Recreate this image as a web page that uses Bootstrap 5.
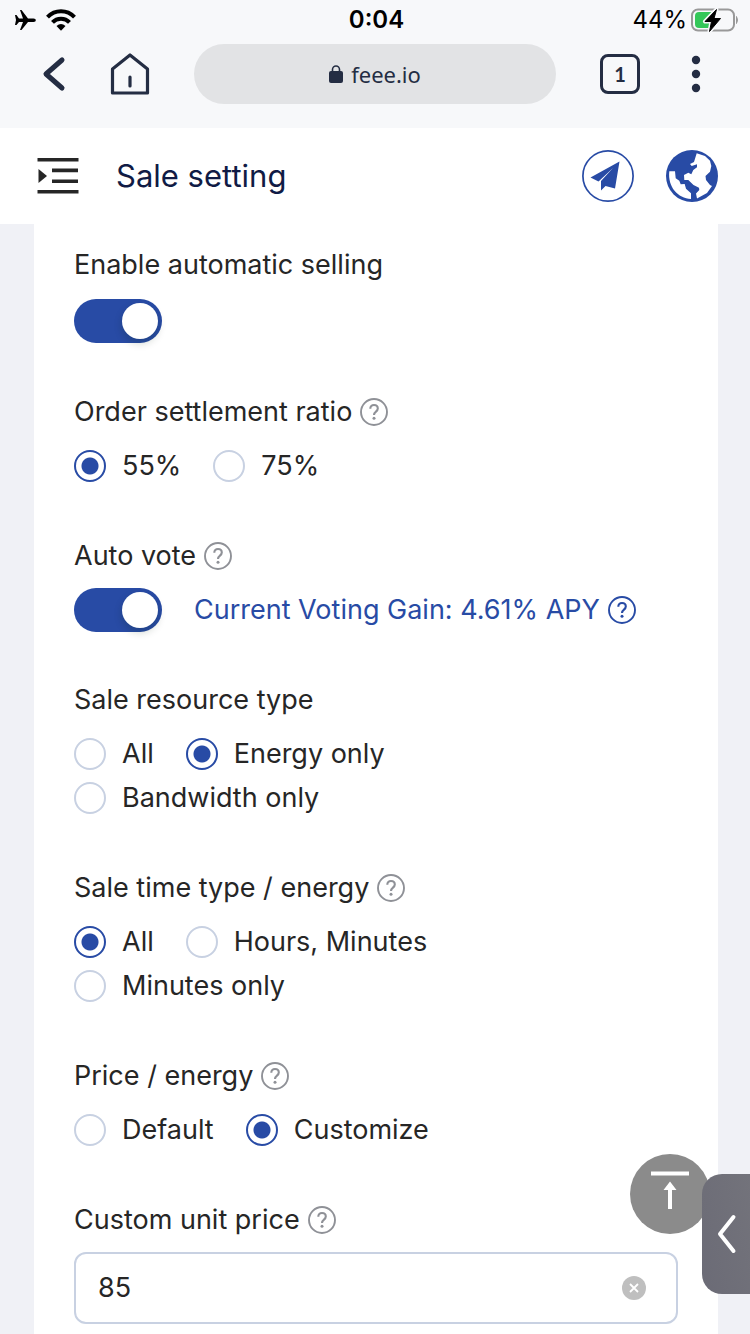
<!DOCTYPE html>
<html lang="en">
<head>
<meta charset="utf-8">
<meta name="viewport" content="width=device-width, initial-scale=1">
<title>Sale setting</title>
<link href="https://cdn.jsdelivr.net/npm/bootstrap@5.3.0/dist/css/bootstrap.min.css" rel="stylesheet">
<style>
  :root { --brand: #284ba5; --ink: #242d43; --line: #c8d1e2; }
  body { background: #f0f1f6; color: #262626; font-family: Inter, "Liberation Sans", sans-serif; font-size: 27px; line-height: 44px; }
  svg { display: block; flex: none; }
  .chrome { background: #f7f8fa; color: var(--ink); height: 128px; }
  .status { height: 40px; font-size: 24px; line-height: 40px; color: #000; padding: 0 11px 0 14px; }
  .status > * { flex: 1 1 0; }
  .clock { font-weight: 600; }
  .browser-bar { height: 68px; padding: 0 34px; }
  .icon-btn { color: inherit; background: none; border: 0; padding: 0; }
  .address { flex: 1; height: 60px; border-radius: 30px; background: #e2e3e5; color: var(--ink); margin: 0 44px; font-family: "Noto Sans", sans-serif; font-size: 22px; }
  .tabs-btn { width: 40px; height: 40px; border: 3px solid var(--ink); border-radius: 8px; font: 700 20px/34px Lato, sans-serif; margin-right: 36px; }
  .app-bar { height: 96px; padding: 0 32px 0 36px; }
  .app-bar h1 { font-size: 31px; line-height: 44px; color: #101b45; font-weight: 400; margin-left: 36px; }
  .app-links { gap: 32px; }
  .panel { min-height: calc(100vh - 224px); margin: 0 32px 0 34px; padding: 19px 40px 10px; }
  .field { margin: 0 0 46px; padding: 0; min-width: 0; }
  .field-title { display: flex; align-items: center; gap: 8px; float: none; font-size: inherit; line-height: 44px; margin-bottom: 10px; }
  .field:first-child { margin-bottom: 47px; }
  .field:first-child .field-title { margin-bottom: 12px; }
  .help { color: #8f9197; }
  .gain { color: var(--brand); text-decoration: none; gap: 8px; margin-left: 32px; }
  .form-check.choice { display: flex; align-items: center; gap: 16px; min-height: 44px; margin: 0 32px 0 0; padding: 0; }
  .choice .form-check-input { width: 32px; height: 32px; float: none; margin: 0; border: 2px solid var(--line); background: #fff; }
  .choice .form-check-input:checked { border-color: var(--brand); background: radial-gradient(circle, var(--brand) 8px, #fff 9px); }
  .form-switch.toggle { padding: 0; min-height: 44px; margin: 0; }
  .toggle .form-check-input { display: block; float: none; width: 88px; height: 44px; margin: 0; border: 0; border-radius: 22px; background: #bfbfbf; position: relative; }
  .toggle .form-check-input:checked { background: var(--brand); }
  .toggle .form-check-input::after { content: ""; position: absolute; top: 4px; right: 4px; width: 36px; height: 36px; border-radius: 50%; background: #fff; box-shadow: 0 4px 8px rgba(0, 35, 11, .2); }
  .price-box { border: 2px solid var(--line); border-radius: 12px; height: 72px; padding: 0 30px 0 22px; }
  .price-box .form-control { font-size: inherit; line-height: 44px; color: inherit; padding: 0; border: 0; background: none; box-shadow: none; }
  .to-top { position: fixed; right: 40px; bottom: 100px; width: 80px; height: 80px; border-radius: 50%; background: #8b8b8b; }
  .drawer { position: fixed; right: 0; bottom: 40px; width: 48px; height: 120px; border-radius: 20px 0 0 20px; background: linear-gradient(75deg, #6b6b76, #73737b); }
</style>
</head>
<body>
<svg class="d-none" aria-hidden="true">
  <symbol id="q" viewBox="0 0 28 28"><circle cx="14" cy="14" r="13" fill="none" stroke="currentColor" stroke-width="1.900"/><path d="M10.300 10.800C10.300 8.500 11.800 7 14 7s3.800 1.400 3.800 3.500c0 3.200-3.800 3-3.800 6.500" fill="none" stroke="currentColor" stroke-width="2.100"/><circle cx="14" cy="20.300" r="1.500" fill="currentColor"/></symbol>
</svg>

<div class="chrome">
  <div class="status d-flex align-items-center">
    <div class="d-flex align-items-center gap-2">
      <svg width="23" height="22" viewBox="0 0 23 22"><path d="M1 6h1.500l2.500 3.500h4L6 1h1.500l6.500 8.500h5.500c3 0 3 3.500 0 3.500H14l-6.500 8H6l3-8H5L2.500 16H1l1-5z" fill="#000"/></svg>
      <svg width="32" height="24" viewBox="0 0 32 24"><g fill="none" stroke="#000" stroke-width="4"><path d="M2.500 9.200C10 1.400 22 1.400 29.500 9.200"/><path d="M7.500 14.300C12 9.500 20 9.500 24.500 14.300"/></g><path d="M11.500 18q4.500-4 9 0L16 22.700z"/></svg>
    </div>
    <div class="clock text-center">0:04</div>
    <div class="d-flex align-items-center justify-content-end gap-1">
      <span>44%</span>
      <svg width="48" height="26" viewBox="0 0 48 26"><rect x="1" y="2.500" width="42" height="21" rx="6" fill="none" stroke="#999" stroke-width="2"/><path d="M45.500 9.500q2 3.500 0 7z" fill="#999" stroke="#999"/><path d="M8 5h12v16H8q-4 0-4-4V9q0-4 4-4z" fill="#34c759"/><path d="M25.500 2.500L14 14.500h6.500L18.500 24.500 29.500 11.500h-6.500z" fill="#000" stroke="#f7f8fa" stroke-width="4" stroke-linejoin="round"/><path d="M25.500 2.500L14 14.500h6.500L18.500 24.500 29.500 11.500h-6.500z" fill="#000" stroke="#000"/></svg>
    </div>
  </div>
  <div class="browser-bar d-flex align-items-center">
    <button class="icon-btn" aria-label="Back"><svg width="40" height="40" viewBox="0 0 40 40"><path d="M28 6L12 20l16 14" fill="none" stroke="currentColor" stroke-width="5" stroke-linecap="round" stroke-linejoin="round"/></svg></button>
    <button class="icon-btn ms-4 ps-3" aria-label="Home"><svg width="36" height="44" viewBox="16 0 36 44" overflow="visible"><g fill="none" stroke="currentColor" stroke-width="3.200" stroke-linecap="round" stroke-linejoin="round"><path d="M14.500 17L32 3l17.500 14v24h-35z"/><path d="M32 25v9"/></g></svg></button>
    <button class="icon-btn address d-flex align-items-center justify-content-center gap-2" type="button">
      <svg width="14" height="18" viewBox="0 0 14 18"><rect y="6" width="14" height="12" rx="2" fill="currentColor"/><path d="M3.500 7V4.500a3.500 3.500 0 0 1 7 0V7" fill="none" stroke="currentColor" stroke-width="1.600"/></svg>
      <span>feee.io</span>
    </button>
    <button class="icon-btn tabs-btn" aria-label="Open tabs: 1">1</button>
    <button class="icon-btn" aria-label="Menu"><svg width="40" height="40" viewBox="0 0 40 40"><g fill="currentColor"><circle cx="20" cy="6" r="4.200"/><circle cx="20" cy="20" r="4.200"/><circle cx="20" cy="34" r="4.200"/></g></svg></button>
  </div>
</div>

<header class="app-bar bg-white d-flex align-items-center">
  <button class="icon-btn" aria-label="Open navigation"><svg width="44" height="40" viewBox="0 0 44 40"><path d="M1.500 3.800h41M16 14.400h26M16 25.200h26M1.500 35.800h41" stroke="#262626" stroke-width="3.600"/><path d="M2.500 13v14l8.500-7z" fill="#262626"/></svg></button>
  <h1 class="mb-0">Sale setting</h1>
  <nav class="app-links d-flex ms-auto">
    <a href="#" aria-label="Telegram"><svg width="52" height="52" viewBox="0 0 52 52"><circle cx="26" cy="26" r="25.100" fill="#fff" stroke="#284ba5" stroke-width="1.700"/><path d="M37.500 11.500L8.500 27.500l8 4L31 18 19 31v9.500l4.500-4.500L33 38.500z" fill="#284ba5"/></svg></a>
    <a href="#" aria-label="Language"><svg width="52" height="52" viewBox="0 0 52 52"><circle cx="26" cy="26" r="26" fill="#284ba5"/><path fill="#fff" d="M30.700 3.300L39 6l5 4.700 1.300 5.300-1.300 5.700-4.500 4.300.5 4 4 5 2 1-5 7-10 5.500-1-5 3.300-3.500-.3-2.300-5.500-2.700-5.200-5h-4l-.3-5 4.300-2.300 3 1.600 2-4.300 3.700-2.700v-3L25.700 16 24 14l4-2z"/><path fill="#fff" d="M3.300 21.300H9l.7 7 3.600 2.400 1.400 3.600 4-.3 1.300 4.700 5 4.600V49C12 48.500 1.500 37 3.300 21.300z"/></svg></a>
  </nav>
</header>

<main class="panel bg-white">
  <div class="field">
    <label class="field-title" for="autoSell">Enable automatic selling</label>
    <div class="form-check form-switch toggle"><input class="form-check-input" type="checkbox" role="switch" id="autoSell" checked></div>
  </div>

  <fieldset class="field">
    <legend class="field-title">Order settlement ratio <svg class="help" width="28" height="28"><use href="#q"/></svg></legend>
    <div class="d-flex flex-wrap">
      <div class="form-check choice"><input class="form-check-input" type="radio" name="ratio" id="r55" checked><label for="r55">55%</label></div>
      <div class="form-check choice"><input class="form-check-input" type="radio" name="ratio" id="r75"><label for="r75">75%</label></div>
    </div>
  </fieldset>

  <div class="field">
    <label class="field-title" for="autoVote">Auto vote <svg class="help" width="28" height="28"><use href="#q"/></svg></label>
    <div class="d-flex align-items-center">
      <div class="form-check form-switch toggle"><input class="form-check-input" type="checkbox" role="switch" id="autoVote" checked></div>
      <a class="gain d-flex align-items-center" href="#">Current Voting Gain: 4.61% APY <svg width="28" height="28"><use href="#q"/></svg></a>
    </div>
  </div>

  <fieldset class="field">
    <legend class="field-title">Sale resource type</legend>
    <div class="d-flex flex-wrap">
      <div class="form-check choice"><input class="form-check-input" type="radio" name="resource" id="resAll"><label for="resAll">All</label></div>
      <div class="form-check choice"><input class="form-check-input" type="radio" name="resource" id="resEnergy" checked><label for="resEnergy">Energy only</label></div>
      <div class="form-check choice"><input class="form-check-input" type="radio" name="resource" id="resBand"><label for="resBand">Bandwidth only</label></div>
    </div>
  </fieldset>

  <fieldset class="field">
    <legend class="field-title">Sale time type / energy <svg class="help" width="28" height="28"><use href="#q"/></svg></legend>
    <div class="d-flex flex-wrap">
      <div class="form-check choice"><input class="form-check-input" type="radio" name="time" id="timeAll" checked><label for="timeAll">All</label></div>
      <div class="form-check choice"><input class="form-check-input" type="radio" name="time" id="timeHours"><label for="timeHours">Hours, Minutes</label></div>
      <div class="form-check choice"><input class="form-check-input" type="radio" name="time" id="timeMin"><label for="timeMin">Minutes only</label></div>
    </div>
  </fieldset>

  <fieldset class="field">
    <legend class="field-title">Price / energy <svg class="help" width="28" height="28"><use href="#q"/></svg></legend>
    <div class="d-flex flex-wrap">
      <div class="form-check choice"><input class="form-check-input" type="radio" name="price" id="priceDef"><label for="priceDef">Default</label></div>
      <div class="form-check choice"><input class="form-check-input" type="radio" name="price" id="priceCus" checked><label for="priceCus">Customize</label></div>
    </div>
  </fieldset>

  <div class="field mb-0">
    <label class="field-title" for="unitPrice">Custom unit price <svg class="help" width="28" height="28"><use href="#q"/></svg></label>
    <div class="price-box d-flex align-items-center">
      <input class="form-control" type="text" inputmode="numeric" id="unitPrice" value="85">
      <button class="icon-btn" type="button" aria-label="Clear"><svg width="24" height="24" viewBox="0 0 24 24"><circle cx="12" cy="12" r="12" fill="#bfbfbf"/><path d="M8 8l8 8M16 8l-8 8" stroke="#fff" stroke-width="1.800"/></svg></button>
    </div>
  </div>
</main>

<button class="icon-btn to-top" aria-label="Back to top"><svg width="80" height="80" viewBox="0 0 80 80" fill="#fff"><path d="M21 17.500h38v4H21zM40 27.500l6.500 8.500H42v19h-4V36h-4.500z"/></svg></button>
<button class="icon-btn drawer" aria-label="Open side panel"><svg width="48" height="120" viewBox="0 0 48 120"><path d="M31.500 43L18 60l13.500 17" fill="none" stroke="#fff" stroke-width="4" stroke-linecap="round" stroke-linejoin="round"/></svg></button>
<script src="https://cdn.jsdelivr.net/npm/bootstrap@5.3.0/dist/js/bootstrap.bundle.min.js"></script>
</body>
</html>
